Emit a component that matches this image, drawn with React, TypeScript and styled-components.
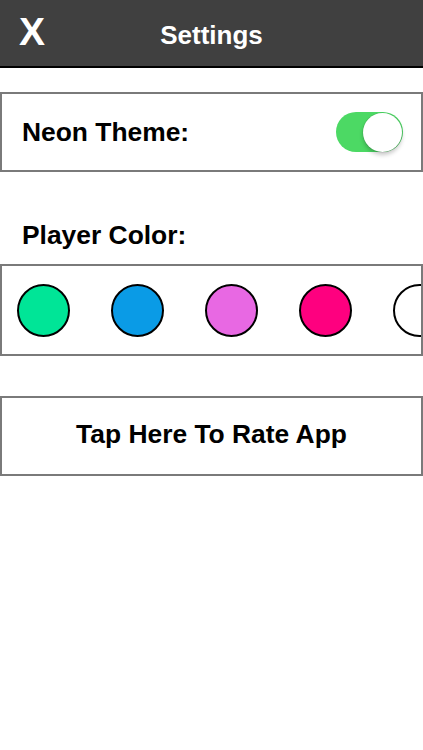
import React from "react";
import styled, { createGlobalStyle } from "styled-components";

const Global = createGlobalStyle`
  html, body { margin: 0; padding: 0; background: #ffffff; }
  body { font-family: "Liberation Sans", Arial, sans-serif; }
  * { box-sizing: border-box; }
`;

const Page = styled.div`
  width: 423px;
  min-height: 750px;
  background: #fff;
  display: flex;
  flex-direction: column;
`;

const Header = styled.header`
  height: 68px;
  background: #404040;
  border-bottom: 2px solid #000;
  display: grid;
  grid-template-columns: 1fr auto 1fr;
  align-items: center;
  color: #fff;
  font-weight: bold;
`;

const Close = styled.div`
  justify-self: start;
  padding-left: 19px;
  font-size: 39px;
  line-height: 39px;
  margin-bottom: 4px;
`;

const Title = styled.div`
  font-size: 26px;
  line-height: 30px;
  margin-top: 3px;
`;

const Card = styled.div<{ $height: number; $top: number }>`
  width: 100%;
  height: ${(p) => p.$height}px;
  margin-top: ${(p) => p.$top}px;
  border: 2px solid #7a7a7a;
  display: flex;
  align-items: center;
`;

const RowCard = styled(Card)`
  justify-content: space-between;
  padding: 0 18px 0 20px;
`;

const ButtonCard = styled(Card)`
  justify-content: center;
  padding-bottom: 4px;
  cursor: pointer;
`;

const SwatchCard = styled(Card)`
  overflow: hidden;
  padding-left: 15px;
  gap: 41px;
`;

const Label = styled.div`
  font-size: 26.4px;
  font-weight: bold;
  color: #000;
  white-space: nowrap;
`;

const SectionLabel = styled(Label)`
  line-height: 30px;
  margin-top: 48px;
  padding-left: 22px;
`;

const Track = styled.div<{ $on: boolean }>`
  width: 67px;
  height: 40px;
  border-radius: 20px;
  background: ${(p) => (p.$on ? "#4cd964" : "#e5e5e5")};
  display: flex;
  align-items: center;
  justify-content: ${(p) => (p.$on ? "flex-end" : "flex-start")};
  padding: 1px;
`;

const Knob = styled.div`
  width: 39px;
  height: 39px;
  border-radius: 50%;
  background: #fff;
  box-shadow: 0 3px 4px rgba(0, 0, 0, 0.22), 0 0 0 0.5px rgba(0, 0, 0, 0.12);
`;

const Swatch = styled.div<{ $color: string }>`
  flex: 0 0 53px;
  width: 53px;
  height: 53px;
  border-radius: 50%;
  background: ${(p) => p.$color};
  border: 2.5px solid #000;
`;

const colors = ["#00e597", "#0a9be6", "#e868e3", "#fe007f", "#ffffff", "#ffe600"];

export default function App() {
  return (
    <Page>
      <Global />
      <Header>
        <Close>X</Close>
        <Title>Settings</Title>
        <div />
      </Header>
      <RowCard $height={80} $top={24}>
        <Label>Neon Theme:</Label>
        <Track $on>
          <Knob />
        </Track>
      </RowCard>
      <SectionLabel>Player Color:</SectionLabel>
      <SwatchCard $height={92} $top={14}>
        {colors.map((c) => (
          <Swatch key={c} $color={c} />
        ))}
      </SwatchCard>
      <ButtonCard $height={80} $top={40}>
        <Label>Tap Here To Rate App</Label>
      </ButtonCard>
    </Page>
  );
}
